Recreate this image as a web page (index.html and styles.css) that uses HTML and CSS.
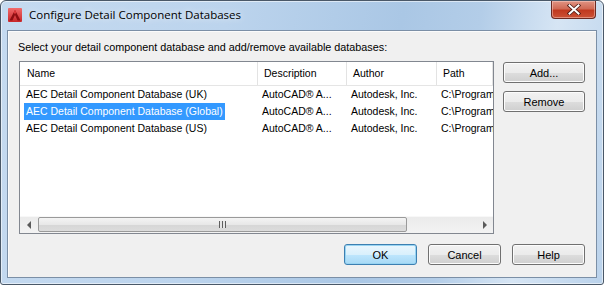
FILE: index.html
```html
<!DOCTYPE html>
<html lang="en">
<head>
  <meta charset="UTF-8" />
  <title>Configure Detail Component Databases</title>
  <link rel="stylesheet" href="styles.css">
</head>
<body>
  <div class="window">
    <div class="titlebar">
      <svg class="app-icon" width="14" height="14" viewBox="0 0 14 14">
        <defs>
          <linearGradient id="icoBg" x1="0" y1="0" x2="0" y2="1">
            <stop offset="0" stop-color="#f26b6b"/>
            <stop offset="1" stop-color="#c8262a"/>
          </linearGradient>
        </defs>
        <rect x="0" y="0" width="14" height="14" rx="1" fill="url(#icoBg)"/>
        <polygon points="7,2 12.5,12.5 9.6,12.5 7,7 4.4,12.5 1.5,12.5" fill="#8e0e12"/>
        <polygon points="7,2 8.2,4.3 7,6.6 5.8,4.3" fill="#e23a3d"/>
      </svg>
      <span class="title">Configure Detail Component Databases</span>
      <div class="close-btn">
        <svg width="14" height="11" viewBox="0 0 14 11">
          <path d="M2.5 1.5 L11.5 9.5 M11.5 1.5 L2.5 9.5" stroke="#4b1a14" stroke-width="3.6" stroke-linecap="square"/>
          <path d="M2.5 1.5 L11.5 9.5 M11.5 1.5 L2.5 9.5" stroke="#fff" stroke-width="2" stroke-linecap="square"/>
        </svg>
      </div>
    </div>

    <div class="client">
      <p class="prompt">Select your detail component database and add/remove available databases:</p>

      <div class="main">
        <div class="listview">
          <div class="lv-body">
            <div class="lv-row lv-head">
              <div class="cell name">Name</div>
              <div class="cell">Description</div>
              <div class="cell">Author</div>
              <div class="cell">Path</div>
            </div>
            <div class="lv-row">
              <div class="cell name"><span class="label">AEC Detail Component Database (UK)</span></div>
              <div class="cell">AutoCAD® A...</div>
              <div class="cell">Autodesk, Inc.</div>
              <div class="cell">C:\ProgramData\Autodesk</div>
            </div>
            <div class="lv-row">
              <div class="cell name"><span class="label selected">AEC Detail Component Database (Global)</span></div>
              <div class="cell">AutoCAD® A...</div>
              <div class="cell">Autodesk, Inc.</div>
              <div class="cell">C:\ProgramData\Autodesk</div>
            </div>
            <div class="lv-row">
              <div class="cell name"><span class="label">AEC Detail Component Database (US)</span></div>
              <div class="cell">AutoCAD® A...</div>
              <div class="cell">Autodesk, Inc.</div>
              <div class="cell">C:\ProgramData\Autodesk</div>
            </div>
          </div>
          <div class="hscroll">
            <div class="sb-btn"><span class="arrow-left"></span></div>
            <div class="sb-track">
              <div class="sb-thumb"><span class="grip"></span></div>
            </div>
            <div class="sb-btn"><span class="arrow-right"></span></div>
          </div>
        </div>

        <div class="side-buttons">
          <button type="button" class="btn">Add...</button>
          <button type="button" class="btn">Remove</button>
        </div>
      </div>

      <div class="footer">
        <button type="button" class="btn default">OK</button>
        <button type="button" class="btn">Cancel</button>
        <button type="button" class="btn">Help</button>
      </div>
    </div>
  </div>
</body>
</html>
```

FILE: styles.css
```css
body {
  margin: 0;
  background: #fff;
  font-family: "Liberation Sans", Arial, sans-serif;
  font-size: 11px;
  color: #000;
}
.window {
  width: 604px;
  height: 285px;
  box-sizing: border-box;
  border: 1px solid #4a5868;
  border-radius: 6px 6px 3px 3px;
  padding: 0 6px 6px 6px;
  display: flex;
  flex-direction: column;
  background: linear-gradient(100deg, #c5daf0 0%, #bcd4ed 35%, #aac7e5 62%, #b3cde8 74%, #d6e5f4 86%, #bad2eb 100%);
  box-shadow: inset 0 0 0 1px rgba(255,255,255,0.55);
}
.titlebar {
  height: 29px;
  display: flex;
  align-items: flex-start;
}
.app-icon {
  margin: 7px 0 0 1px;
  flex: none;
}
.title {
  margin: 6px 0 0 7px;
  font-family: "Open Sans", "Liberation Sans", sans-serif;
  font-size: 11.5px;
  line-height: 16px;
  color: #000;
  text-shadow: 0 0 6px rgba(255,255,255,0.9);
}
.close-btn {
  margin-left: auto;
  margin-right: 1px;
  width: 45px;
  height: 18px;
  box-sizing: border-box;
  border: 1px solid #6b2a22;
  border-top: none;
  border-radius: 0 0 4px 4px;
  background: linear-gradient(#e09483 0%, #d06a55 45%, #c0391f 55%, #cc5236 100%);
  box-shadow: inset 0 0 0 1px rgba(255,220,210,0.45);
  display: flex;
  align-items: center;
  justify-content: center;
}
.client {
  flex: 1;
  border: 1px solid #7b8fa6;
  background: #f0f0f0;
  padding: 10px 10px 0 11px;
  box-shadow: inset 1px 1px 0 #fbfbfb;
}
.prompt {
  margin: 0 0 7px -1px;
  font-size: 10.8px;
  line-height: 13px;
}
.main {
  display: flex;
  gap: 9px;
  align-items: flex-start;
}
.listview {
  width: 475px;
  height: 173px;
  box-sizing: border-box;
  border: 1px solid #828790;
  background: #fff;
  display: flex;
  flex-direction: column;
  font-size: 10.5px;
}
.lv-body {
  flex: 1;
  overflow: hidden;
}
.lv-row {
  display: grid;
  grid-template-columns: 238px 89px 90px 56px;
  height: 17px;
  line-height: 17px;
}
.cell {
  padding-left: 4px;
  white-space: nowrap;
  overflow: hidden;
}
.label {
  padding: 0 2px;
  display: inline-block;
}
.label.selected {
  background: #3399ff;
  color: #fff;
}
.lv-head {
  height: 23px;
  line-height: 23px;
  border-bottom: 1px solid #e5e5e5;
}
.lv-head .cell {
  padding-left: 6px;
  border-right: 1px solid #e3e3e3;
}
.lv-head .cell.name {
  padding-left: 7px;
}
.hscroll {
  height: 17px;
  display: flex;
  background: linear-gradient(#ebebeb, #f3f3f3);
  border-top: 1px solid #f8f8f8;
  box-sizing: border-box;
}
.sb-btn {
  width: 17px;
  flex: none;
  display: flex;
  align-items: center;
  justify-content: center;
}
.arrow-left {
  width: 0;
  height: 0;
  border-top: 4px solid transparent;
  border-bottom: 4px solid transparent;
  border-right: 4px solid #5a5a5a;
}
.arrow-right {
  width: 0;
  height: 0;
  border-top: 4px solid transparent;
  border-bottom: 4px solid transparent;
  border-left: 4px solid #5a5a5a;
}
.sb-track {
  flex: 1;
  padding: 0 1px;
}
.sb-thumb {
  width: 369px;
  height: 15px;
  box-sizing: border-box;
  border: 1px solid #9a9a9a;
  border-radius: 2px;
  background: linear-gradient(#f4f4f4 0%, #e8e8e8 50%, #d6d6d6 51%, #dcdcdc 100%);
  display: flex;
  align-items: center;
  justify-content: center;
}
.grip {
  width: 7px;
  height: 7px;
  background: repeating-linear-gradient(90deg, #5f5f5f 0 1px, #e6e6e6 1px 3px);
}
.side-buttons {
  display: flex;
  flex-direction: column;
  gap: 8px;
  padding-top: 1px;
}
.side-buttons .btn {
  width: 82px;
}
.btn {
  height: 21px;
  width: 73px;
  box-sizing: border-box;
  border: 1px solid #707070;
  border-radius: 3px;
  background: linear-gradient(#f2f2f2 0%, #ebebeb 50%, #dddddd 51%, #cfcfcf 100%);
  box-shadow: inset 0 0 0 1px #fcfcfc;
  font-family: "Liberation Sans", Arial, sans-serif;
  font-size: 11px;
  color: #000;
  padding: 0;
}
.btn.default {
  border-color: #3c7fb1;
  background: linear-gradient(#eaf6fd 0%, #d9f0fc 50%, #bee6fd 51%, #a7d9f5 100%);
  box-shadow: inset 0 0 0 1px #98d4f2;
}
.footer {
  display: flex;
  justify-content: flex-end;
  gap: 11px;
  margin-top: 10px;
  padding-right: 1px;
}
```
